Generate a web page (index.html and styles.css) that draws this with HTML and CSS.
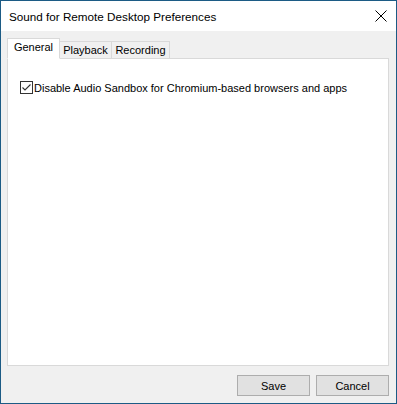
FILE: index.html
```html
<!DOCTYPE html>
<html lang="en">
  <head>
    <meta charset="utf-8">
    <title>Sound for Remote Desktop Preferences</title>
    <link rel="stylesheet" href="styles.css">
  </head>
  <body>
<div class="window">
  <div class="titlebar">
    <span class="title">Sound for Remote Desktop Preferences</span>
    <span class="close">
      <svg width="12" height="12" viewBox="0 0 12 12">
        <path d="M0.5 0.5 L11.5 11.5 M11.5 0.5 L0.5 11.5" stroke="#000" stroke-width="1" fill="none"/>
      </svg>
    </span>
  </div>
  <div class="client">
    <div class="tabs">
      <div class="tab selected">General</div>
      <div class="tab">Playback</div>
      <div class="tab">Recording</div>
    </div>
    <div class="panel">
      <label class="check">
        <span class="box">
          <svg width="11" height="11" viewBox="0 0 11 11">
            <path d="M1.5 5.5 L4 8 L9.5 2.5" stroke="#333" stroke-width="1.1" fill="none"/>
          </svg>
        </span>
        <span>Disable Audio Sandbox for Chromium-based browsers and apps</span>
      </label>
    </div>
    <div class="buttons">
      <button>Save</button>
      <button>Cancel</button>
    </div>
  </div>
</div>
  </body>
</html>
```

FILE: styles.css
```css
* {
  margin: 0px;
  padding: 0px;
  box-sizing: border-box;
}
body {
  font-family: 'Liberation Sans', Arial, sans-serif;
  font-size: 11px;
  color: black;
  background-color: white;
}
.window {
  width: 397px;
  height: 404px;
  border: 1px solid #1c5b85;
  display: flex;
  flex-direction: column;
}
.titlebar {
  height: 30px;
  background-color: white;
  display: flex;
  align-items: center;
  padding-left: 8px;
  padding-right: 9px;
}
.title {
  flex: 1;
  font-size: 11.7px;
}
.close {
  display: flex;
}
.client {
  flex: 1;
  background-color: #f0f0f0;
  padding: 7px 7px 7px 6px;
  display: flex;
  flex-direction: column;
}
.tabs {
  display: flex;
  align-items: flex-end;
  height: 20px;
  position: relative;
  z-index: 1;
}
.tab {
  height: 18px;
  margin-bottom: -1px;
  border: 1px solid #d9d9d9;
  border-left: none;
  background-color: #f0f0f0;
  text-align: center;
  line-height: 17px;
  white-space: nowrap;
}
.tab:nth-child(2) {
  width: 52px;
}
.tab:nth-child(3) {
  width: 58px;
}
.tab.selected {
  width: 53px;
  height: 21px;
  border-left: 1px solid #d9d9d9;
  border-bottom-color: white;
  background-color: white;
  line-height: 17px;
}
.panel {
  height: 308px;
  background-color: white;
  border: 1px solid #d9d9d9;
  padding: 22px 12px;
}
.check {
  display: flex;
  align-items: center;
  gap: 1px;
  white-space: nowrap;
}
.box {
  width: 13px;
  height: 13px;
  border: 1px solid #333;
  display: flex;
  align-items: center;
  justify-content: center;
}
.buttons {
  display: flex;
  justify-content: flex-end;
  gap: 6px;
  margin-top: 9px;
}
button {
  width: 73px;
  height: 21px;
  font-family: 'Liberation Sans', Arial, sans-serif;
  font-size: 11px;
  color: black;
  background-color: #e1e1e1;
  border: 1px solid #adadad;
}
```
